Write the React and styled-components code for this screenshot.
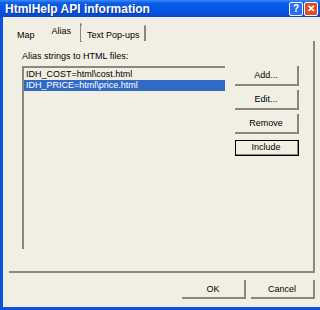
import React from "react";
import styled, { createGlobalStyle } from "styled-components";

const Global = createGlobalStyle`
  html, body { margin: 0; padding: 0; background: #fff; }
  body { font-family: "Liberation Sans", Arial, sans-serif; }
`;

const BG = "#F1EFE3";
const DARK = "#8A887C";

const Frame = styled.div`
  width: 320px;
  height: 310px;
  box-sizing: border-box;
  background: ${BG};
  border-left: 3px solid #0A53DE;
  border-bottom: 3px solid #0A53DE;
  display: flex;
  flex-direction: column;
  font-size: 9px;
  color: #000;
`;

const TitleBar = styled.div`
  height: 17px;
  margin-left: -3px;
  padding: 0 2px 0 5px;
  display: flex;
  align-items: center;
  background: linear-gradient(#3C8CF5 0%, #0A5CE8 18%, #0553E2 70%, #0A48C8 100%);
`;

const Title = styled.div`
  flex: 1;
  color: #fff;
  font-weight: bold;
  font-size: 12px;
  text-shadow: 1px 1px 0 #0A2E8C;
`;

const CapButton = styled.div`
  width: 12px;
  height: 12px;
  margin-left: 1px;
  border: 1px solid #fff;
  border-radius: 2px;
  display: flex;
  align-items: center;
  justify-content: center;
  color: #fff;
  font-weight: bold;
  font-size: 10px;
  background: ${(p) => (p.$close ? "#E04C28" : "#2A6FEA")};
`;

const Body = styled.div`
  flex: 1;
  display: flex;
  flex-direction: column;
  padding: 6px 5px 8px 6px;
`;

const TabStrip = styled.div`
  height: 18px;
  display: flex;
  align-items: flex-end;
  padding-left: 1px;
  position: relative;
  z-index: 1;
`;

const Tab = styled.div`
  height: ${(p) => (p.$active ? "19px" : "16px")};
  margin-bottom: ${(p) => (p.$active ? "-1px" : "0")};
  margin-left: ${(p) => (p.$active ? "-2px" : "0")};
  margin-right: ${(p) => (p.$active ? "-1px" : "0")};
  padding: ${(p) => (p.$active ? "4px 9px 0 10px" : p.$first ? "6px 7px 0 7px" : "6px 4px 0 6px")};
  box-sizing: border-box;
  background: ${BG};
  border-right: 2px solid ${(p) => (p.$first ? BG : DARK)};
  border-radius: 2px 2px 0 0;
  line-height: 9px;
  white-space: nowrap;
`;

const Panel = styled.div`
  flex: 1;
  box-sizing: border-box;
  border-right: 2px solid ${DARK};
  border-bottom: 2px solid ${DARK};
  padding: 10px 9px 20px 13px;
  display: flex;
  flex-direction: column;
`;

const Label = styled.div`
  line-height: 11px;
  margin-bottom: 4px;
`;

const Row = styled.div`
  display: flex;
  align-items: flex-start;
`;

const ListBox = styled.div`
  width: 203px;
  height: 183px;
  box-sizing: border-box;
  border-top: 2px solid ${DARK};
  border-left: 2px solid ${DARK};
  padding-top: 1px;
`;

const Item = styled.div`
  line-height: 11px;
  padding-left: 2px;
  white-space: nowrap;
  background: ${(p) => (p.$selected ? "#316AC5" : "transparent")};
  color: ${(p) => (p.$selected ? "#fff" : "#000")};
`;

const ButtonCol = styled.div`
  margin-left: 10px;
  display: flex;
  flex-direction: column;
  gap: 4px;
`;

const Button = styled.div`
  width: 64px;
  height: ${(p) => (p.$default ? "16px" : p.$short ? "19px" : "20px")};
  margin-top: ${(p) => (p.$default ? "2px" : "0")};
  box-sizing: border-box;
  display: flex;
  align-items: center;
  justify-content: center;
  background: ${BG};
  border-right: 2px solid ${DARK};
  border-bottom: 2px solid ${DARK};
  outline: ${(p) => (p.$default ? "1px solid #000" : "none")};
  outline-offset: -1px;
`;

const Footer = styled.div`
  display: flex;
  justify-content: flex-end;
  gap: 5px;
  margin-top: 7px;
`;

export default function App() {
  return (
    <>
      <Global />
      <Frame>
        <TitleBar>
          <Title>HtmlHelp API information</Title>
          <CapButton>?</CapButton>
          <CapButton $close>✕</CapButton>
        </TitleBar>
        <Body>
          <TabStrip>
            <Tab $first>Map</Tab>
            <Tab $active>Alias</Tab>
            <Tab>Text Pop-ups</Tab>
          </TabStrip>
          <Panel>
            <Label>Alias strings to HTML files:</Label>
            <Row>
              <ListBox>
                <Item>IDH_COST=html\cost.html</Item>
                <Item $selected>IDH_PRICE=html\price.html</Item>
              </ListBox>
              <ButtonCol>
                <Button>Add...</Button>
                <Button>Edit...</Button>
                <Button>Remove</Button>
                <Button $default>Include</Button>
              </ButtonCol>
            </Row>
          </Panel>
          <Footer>
            <Button $short>OK</Button>
            <Button $short>Cancel</Button>
          </Footer>
        </Body>
      </Frame>
    </>
  );
}
